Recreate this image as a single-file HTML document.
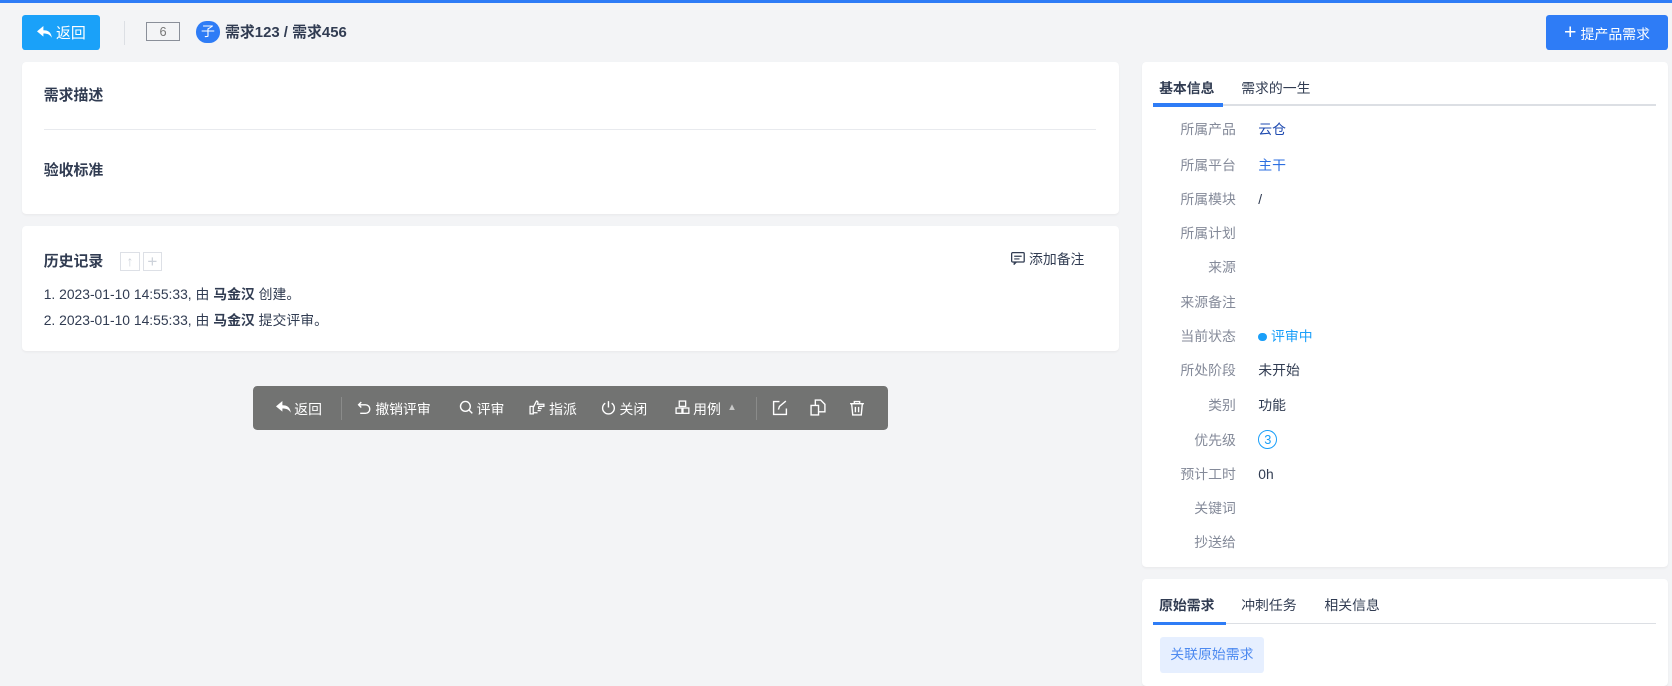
<!DOCTYPE html>
<html><head><meta charset="utf-8"><style>
html,body{margin:0;padding:0;}
body{width:1672px;height:676px;overflow:hidden;background:#f3f4f6;font-family:"Liberation Sans","Noto Sans CJK SC",sans-serif;}
#w{position:relative;width:1568px;height:634px;zoom:1.06633;color:#313c52;font-size:13px;}
.a{position:absolute;}
.card{position:absolute;background:#fff;border-radius:4px;box-shadow:0 1px 2px rgba(0,0,0,.04);}
.btn{position:absolute;color:#fff;border-radius:3px;font-size:14px;display:flex;align-items:center;justify-content:center;gap:4px;}
.tb{position:absolute;top:362px;left:237px;width:596px;height:41px;background:#727372;border-radius:4px;color:#fff;font-size:13px;}
.tb span{position:absolute;top:0;height:41px;display:flex;align-items:center;gap:3px;}
.lab{position:absolute;right:405px;color:#848a99;font-size:13px;text-align:right;line-height:18px;}
.val{position:absolute;left:109px;font-size:13px;line-height:18px;}
</style></head><body><div id="w">
<div class="a" style="left:0;top:0;width:1568px;height:3px;background:#2e7cf6"></div>
<div class="btn" style="left:21px;top:14px;width:73px;height:33px;background:#1aa1f9">
<svg width="14" height="12" viewBox="0 0 14 12"><path d="M6 0L0 5l6 5V7c4 0 6 1 8 4-1-5-3-7-8-7z" fill="#fff"/></svg>返回</div>
<div class="a" style="left:116px;top:20px;width:1px;height:22px;background:#dcdfe4"></div>
<div class="a" style="left:137px;top:21px;width:30px;height:16px;border:1px solid #8a8f99;color:#777;font-size:12px;text-align:center;line-height:16px">6</div>
<div class="a" style="left:184px;top:20px;width:22px;height:20px;border-radius:10px;background:#2e7cf6;color:#fff;font-size:13px;text-align:center;line-height:20px">子</div>
<div class="a" style="left:211px;top:21px;font-size:14px;font-weight:bold;color:#313c52;line-height:20px">需求123 / 需求456</div>
<div class="btn" style="left:1450px;top:14px;width:114px;height:33px;background:#2e7cf6;font-size:13px"><span style="font-size:20px;line-height:14px;font-weight:300">+</span>提产品需求</div>

<div class="card" style="left:21px;top:58px;width:1028px;height:143px">
<div class="a" style="left:20px;top:21px;font-size:14px;font-weight:bold">需求描述</div>
<div class="a" style="left:20px;top:63px;width:987px;height:1px;background:#e8eaee"></div>
<div class="a" style="left:20px;top:91px;font-size:14px;font-weight:bold">验收标准</div>
</div>

<div class="card" style="left:21px;top:212px;width:1028px;height:117px">
<div class="a" style="left:20px;top:22px;font-size:14px;font-weight:bold">历史记录</div>
<div class="a" style="left:92px;top:24px;width:16px;height:16px;border:1px solid #dde0e6;color:#cdd2da;font-size:13px;text-align:center;line-height:16px">↑</div>
<div class="a" style="left:113px;top:24px;width:16px;height:16px;border:1px solid #dde0e6;color:#cdd2da;font-size:16px;text-align:center;line-height:16px">+</div>
<div class="a" style="left:927px;top:21px;font-size:13px;display:flex;align-items:center;gap:4px"><svg width="13" height="12" viewBox="0 0 13 12"><rect x=".6" y=".6" width="11.8" height="8.8" rx="1" fill="none" stroke="#313c52" stroke-width="1.2"/><path d="M3 4h7M3 6.5h5M3 9.5v2l2-2" stroke="#313c52" stroke-width="1.1" fill="none"/></svg>添加备注</div>
<div class="a" style="left:20px;top:53px">1. 2023-01-10 14:55:33, 由 <b>马金汉</b> 创建。</div>
<div class="a" style="left:20px;top:78px">2. 2023-01-10 14:55:33, 由 <b>马金汉</b> 提交评审。</div>
</div>

<div class="tb">
<span style="left:22px"><svg width="14" height="12" viewBox="0 0 14 12"><path d="M6 0L0 5l6 5V7c4 0 6 1 8 4-1-5-3-7-8-7z" fill="#fff"/></svg>返回</span>
<div class="a" style="left:83px;top:10px;width:1px;height:22px;background:#8a8b8a"></div>
<span style="left:98px"><svg width="14" height="14" viewBox="0 0 14 14"><path d="M4 2L1.5 4.5 4 7M1.5 4.5H8a4 4 0 010 8H3" fill="none" stroke="#fff" stroke-width="1.3"/></svg>撤销评审</span>
<span style="left:193px"><svg width="14" height="14" viewBox="0 0 14 14"><circle cx="6" cy="6" r="4.6" fill="none" stroke="#fff" stroke-width="1.3"/><path d="M9.5 9.5l3 3" stroke="#fff" stroke-width="1.3"/></svg>评审</span>
<span style="left:259px"><svg width="16" height="14" viewBox="0 0 16 14"><path d="M1 6h3v7H1zM4 7l3-6c1 0 2 1 1 3h6v2H9M9 6v2h3M8 10h3M8 12H4" fill="none" stroke="#fff" stroke-width="1.2"/></svg>指派</span>
<span style="left:327px"><svg width="14" height="14" viewBox="0 0 14 14"><path d="M4 3A5.5 5.5 0 1010 3M7 1v6" fill="none" stroke="#fff" stroke-width="1.3"/></svg>关闭</span>
<span style="left:396px"><svg width="14" height="14" viewBox="0 0 14 14"><rect x="4" y="1" width="6" height="5" fill="none" stroke="#fff" stroke-width="1.2"/><rect x="1" y="7.5" width="5.5" height="5" fill="none" stroke="#fff" stroke-width="1.2"/><rect x="7.5" y="7.5" width="5.5" height="5" fill="none" stroke="#fff" stroke-width="1.2"/></svg>用例<i style="font-style:normal;font-size:9px;color:#c8c9c8;margin-left:3px">▲</i></span>
<div class="a" style="left:472px;top:10px;width:1px;height:22px;background:#8a8b8a"></div>
<span style="left:487px"><svg width="15" height="15" viewBox="0 0 15 15"><path d="M7 1.5H1.5v12h12V8M6 9l1-3 6-5" fill="none" stroke="#fff" stroke-width="1.3"/></svg></span>
<span style="left:523px"><svg width="16" height="16" viewBox="0 0 16 16"><path d="M1 6h7v9H1zM5 6V1h5l4 4v7H8" fill="none" stroke="#fff" stroke-width="1.3"/></svg></span>
<span style="left:559px"><svg width="15" height="15" viewBox="0 0 15 15"><path d="M1 3.5h13M5 3.5V1.5h5v2M2.5 3.5l1 10.5h8l1-10.5M6 6.5v5M9 6.5v5" fill="none" stroke="#fff" stroke-width="1.3"/></svg></span>
</div>

<div class="card" style="left:1071px;top:58px;width:493px;height:474px">
<div class="a" style="left:16px;top:14px;font-size:13px;font-weight:bold">基本信息</div>
<div class="a" style="left:93px;top:14px;font-size:13px">需求的一生</div>
<div class="a" style="left:10px;top:40px;width:472px;height:1px;background:#dcdfe4"></div>
<div class="a" style="left:10px;top:39px;width:66px;height:3px;background:#2e7cf6"></div>
<div style="position:absolute;left:0;top:0;width:493px">
<div class="lab" style="top:55px">所属产品</div><div class="val" style="top:55px;color:#1f4bb0">云仓</div>
<div class="lab" style="top:88px">所属平台</div><div class="val" style="top:88px;color:#2e6fe0">主干</div>
<div class="lab" style="top:120px">所属模块</div><div class="val" style="top:120px">/</div>
<div class="lab" style="top:152px">所属计划</div>
<div class="lab" style="top:184px">来源</div>
<div class="lab" style="top:217px">来源备注</div>
<div class="lab" style="top:249px">当前状态</div><div class="val" style="top:249px;color:#1a9ff9"><span style="display:inline-block;width:8px;height:8px;border-radius:4px;background:#1a9ff9;margin-right:4px;vertical-align:0px"></span>评审中</div>
<div class="lab" style="top:281px">所处阶段</div><div class="val" style="top:281px">未开始</div>
<div class="lab" style="top:313px">类别</div><div class="val" style="top:313px">功能</div>
<div class="lab" style="top:346px">优先级</div><div class="val" style="top:345px;width:16px;height:16px;border:1px solid #1a9ff9;border-radius:9px;color:#1a9ff9;text-align:center;line-height:16px;font-size:12px">3</div>
<div class="lab" style="top:378px">预计工时</div><div class="val" style="top:378px">0h</div>
<div class="lab" style="top:410px">关键词</div>
<div class="lab" style="top:442px">抄送给</div>
</div>
</div>

<div class="card" style="left:1071px;top:543px;width:493px;height:100px">
<div class="a" style="left:16px;top:14px;font-size:13px;font-weight:bold">原始需求</div>
<div class="a" style="left:93px;top:14px;font-size:13px">冲刺任务</div>
<div class="a" style="left:171px;top:14px;font-size:13px">相关信息</div>
<div class="a" style="left:10px;top:41px;width:472px;height:1px;background:#dcdfe4"></div>
<div class="a" style="left:10px;top:40px;width:69px;height:3px;background:#2e7cf6"></div>
<div class="a" style="left:17px;top:54px;width:97px;height:34px;background:#e6efff;border-radius:3px;color:#4d8af0;text-align:center;line-height:32px;font-size:13px">关联原始需求</div>
</div>
</div></body></html>
